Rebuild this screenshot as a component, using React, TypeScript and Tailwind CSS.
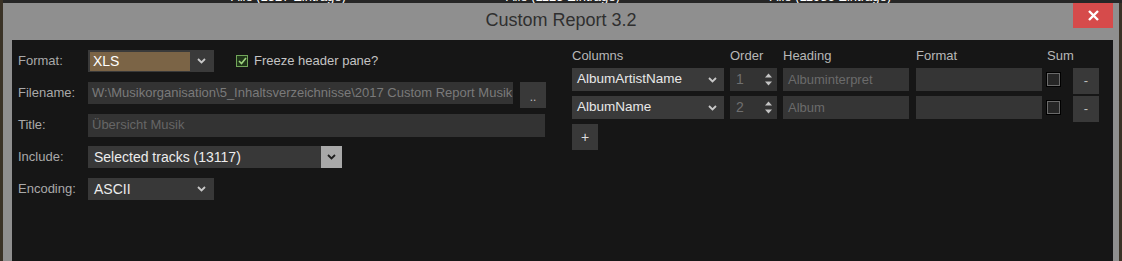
import React from "react";

const Chevron = ({ color = "#c8c8c8" }: { color?: string }) => (
  <svg width="9" height="6" viewBox="0 0 9 6">
    <polyline points="1,1 4.5,4.5 8,1" fill="none" stroke={color} strokeWidth="1.8" />
  </svg>
);

const Spin = () => (
  <svg width="7" height="13" viewBox="0 0 7 13">
    <path d="M3.5 0.5 L7 4.5 L0 4.5Z" fill="#c4c4c4" />
    <path d="M0 8.5 L7 8.5 L3.5 12.5Z" fill="#c4c4c4" />
  </svg>
);

function Label({ children }: { children: React.ReactNode }) {
  return <div className="w-[70px] shrink-0 text-[13px] text-[#a9a9a9]">{children}</div>;
}

function ColumnRow({ name, order, heading }: { name: string; order: string; heading: string }) {
  return (
    <div className="flex h-[23px] items-start">
      <div className="w-[152px] h-[23px] bg-[#3a3a3a] flex items-center justify-between pl-[5px] pr-[7px] text-[13.5px] text-[#e8e8e8]">
        <span>{name}</span>
        <Chevron />
      </div>
      <div className="ml-[6px] w-[47px] h-[23px] bg-[#333333] flex items-center justify-between pl-[6px] pr-[5px] text-[14px] text-[#6f6f6f]">
        <span>{order}</span>
        <Spin />
      </div>
      <div className="ml-[6px] w-[126px] h-[23px] bg-[#353535] flex items-center pl-[5px] text-[13px] text-[#6b6b6b]">
        {heading}
      </div>
      <div className="ml-[7px] w-[126px] h-[23px] bg-[#353535]" />
      <div className="ml-[5px] w-[26px] h-[23px] flex items-center">
        <div className="w-[13px] h-[13px] border border-[#6a6a6a] bg-[#262626] outline outline-1 outline-black" />
      </div>
      <button className="w-[26px] h-[26px] bg-[#393939] text-[#bdbdbd] text-[13px] flex items-center justify-center">-</button>
    </div>
  );
}

export default function App() {
  return (
    <div className="w-[1122px] h-[261px] bg-[#3a3226] overflow-hidden flex flex-col font-['Liberation_Sans',Arial,sans-serif]">
      <div className="h-[3px] ml-[3px] bg-[#262626] overflow-hidden flex text-[13px] text-white leading-none">
        <span className="ml-[228px] -mt-[10px]">Alle (1527 Einträge)</span>
        <span className="ml-[160px] -mt-[10px]">Alle (1125 Einträge)</span>
        <span className="ml-[150px] -mt-[10px]">Alle (11986 Einträge)</span>
      </div>
      <div className="flex-1 mx-[3px] bg-[#8f8f8f] flex flex-col">
        <div className="h-[37px] relative flex items-center justify-center">
          <span className="text-[18px] text-[#2f2f2f] -mt-[3px]">Custom Report 3.2</span>
          <button className="absolute right-[6px] top-0 w-[40px] h-[25px] bg-[#d64b4b] flex items-center justify-center">
            <svg width="11" height="11" viewBox="0 0 11 11">
              <path d="M1 1 L10 10 M10 1 L1 10" stroke="#ffffff" strokeWidth="2.4" />
            </svg>
          </button>
        </div>
        <div className="flex-1 ml-[9px] mr-[6px] bg-[#161616] flex">
          <div className="w-[560px] shrink-0 pl-[6px] pt-[5px] flex flex-col">
            <div className="h-[32px] flex items-center">
              <Label>Format:</Label>
              <div className="w-[126px] h-[22px] bg-[#3a3a3a] flex items-center justify-between pl-[2px] pr-[8px]">
                <div className="w-[100px] h-[19px] bg-[#7b6446] flex items-center pl-[3px] text-[14px] text-white">XLS</div>
                <Chevron />
              </div>
              <div className="ml-[22px] w-[12px] h-[12px] border border-[#72a65a] bg-[#1f3519] flex items-center justify-center">
                <svg width="9" height="8" viewBox="0 0 9 8">
                  <polyline points="1,4 3.5,6.5 8,1" fill="none" stroke="#9fd47f" strokeWidth="1.6" />
                </svg>
              </div>
              <span className="ml-[6px] text-[13px] text-[#c4c4c4]">Freeze header pane?</span>
            </div>
            <div className="h-[32px] flex items-center">
              <Label>Filename:</Label>
              <div className="w-[425px] h-[22px] bg-[#333333] flex items-center pl-[4px] overflow-hidden whitespace-nowrap text-[13px] text-[#7a7a7a]">
                W:\Musikorganisation\5_Inhaltsverzeichnisse\2017 Custom Report Musik.xls
              </div>
              <button className="ml-[7px] mt-[4px] w-[26px] h-[26px] bg-[#393939] text-[#bdbdbd] text-[12px] flex items-end justify-center pb-[5px] leading-none">..</button>
            </div>
            <div className="h-[32px] flex items-center">
              <Label>Title:</Label>
              <div className="w-[457px] h-[23px] bg-[#333333] flex items-center pl-[4px] text-[13px] text-[#666666]">Übersicht Musik</div>
            </div>
            <div className="h-[32px] flex items-center">
              <Label>Include:</Label>
              <div className="w-[254px] h-[22px] bg-[#383838] flex items-center justify-between pl-[6px]">
                <span className="text-[14px] text-[#ececec]">Selected tracks (13117)</span>
                <div className="w-[21px] h-[22px] bg-[#a9a9a9] flex items-center justify-center">
                  <Chevron color="#1e1e1e" />
                </div>
              </div>
            </div>
            <div className="h-[32px] flex items-center">
              <Label>Encoding:</Label>
              <div className="w-[126px] h-[22px] bg-[#383838] flex items-center justify-between pl-[6px] pr-[8px]">
                <span className="text-[14px] text-[#ececec]">ASCII</span>
                <Chevron />
              </div>
            </div>
          </div>
          <div className="pt-[9px] flex flex-col gap-[5px]">
            <div className="h-[14px] -mb-[0px] flex items-center text-[13px] text-[#b8b8b8] leading-[18px]">
              <span className="w-[152px]">Columns</span>
              <span className="ml-[6px] w-[47px]">Order</span>
              <span className="ml-[6px] w-[126px]">Heading</span>
              <span className="ml-[7px] w-[126px]">Format</span>
              <span className="ml-[5px]">Sum</span>
            </div>
            <ColumnRow name="AlbumArtistName" order="1" heading="Albuminterpret" />
            <ColumnRow name="AlbumName" order="2" heading="Album" />
            <button className="w-[26px] h-[26px] bg-[#393939] text-[#dedede] text-[14px] flex items-center justify-center">+</button>
          </div>
        </div>
      </div>
    </div>
  );
}
